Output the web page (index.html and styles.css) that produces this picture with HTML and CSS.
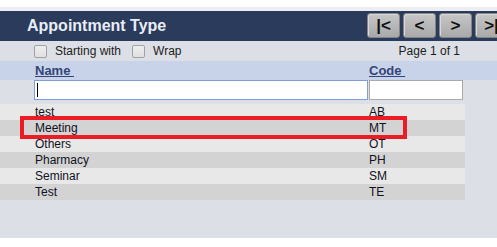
FILE: index.html
```html
<!DOCTYPE html>
<html>
<head>
<meta charset="utf-8">
<link rel="stylesheet" href="styles.css">
</head>
<body>
<div class="panel">
  <div class="titlebar">
    <div class="title">Appointment Type</div>
    <div class="pager">
      <button class="pbtn">|&lt;</button>
      <button class="pbtn">&lt;</button>
      <button class="pbtn">&gt;</button>
      <button class="pbtn">&gt;|</button>
    </div>
  </div>
  <div class="options">
    <label class="opt"><span class="cb"></span>Starting with</label>
    <label class="opt"><span class="cb"></span>Wrap</label>
    <span class="pageinfo">Page 1 of 1</span>
  </div>
  <div class="colhead">
    <span></span>
    <a class="sort">Name&nbsp;</a>
    <a class="sort">Code&nbsp;</a>
  </div>
  <div class="filter">
    <span></span>
    <div class="field focus"><span class="caret"></span></div>
    <div class="field code"></div>
  </div>
  <div class="rows">
    <div class="row"><span></span><span>test</span><span>AB</span></div>
    <div class="row alt"><span></span><span>Meeting</span><span>MT</span></div>
    <div class="row"><span></span><span>Others</span><span>OT</span></div>
    <div class="row alt"><span></span><span>Pharmacy</span><span>PH</span></div>
    <div class="row"><span></span><span>Seminar</span><span>SM</span></div>
    <div class="row alt"><span></span><span>Test</span><span>TE</span></div>
  </div>
  <div class="highlight"></div>
</div>
</body>
</html>
```
FILE: styles.css
```css
html, body {
  margin: 0;
  padding: 0;
  background: #ffffff;
  overflow: hidden;
}
body {
  width: 497px;
  height: 247px;
  padding-top: 7px;
  box-sizing: border-box;
  font-family: "Liberation Sans", Arial, sans-serif;
}
.panel {
  position: relative;
  background: #dcdfe6;
  border-top: 4px solid #eceef1;
  padding-bottom: 38px;
  overflow: hidden;
}
.titlebar {
  display: flex;
  align-items: center;
  height: 30px;
  background: #2b3b5c;
}
.title {
  width: 340px;
  flex-shrink: 0;
  padding-left: 27px;
  font-size: 16px;
  font-weight: bold;
  color: #e8edf5;
}
.pager {
  display: flex;
  gap: 3px;
  flex-shrink: 0;
  padding-bottom: 1px;
}
.pbtn {
  width: 33px;
  height: 25px;
  padding: 0;
  border: 1px solid #858585;
  border-radius: 3px;
  background: linear-gradient(#c6c6c6, #a9a9a9);
  box-shadow: inset 1px 1px 0 #d8d8d8;
  font-family: "Liberation Sans", Arial, sans-serif;
  font-size: 17px;
  font-weight: bold;
  color: #111;
  line-height: 22px;
}
.options {
  display: flex;
  align-items: center;
  height: 20px;
  padding-left: 34px;
  font-size: 12px;
  color: #1c1c1c;
}
.opt {
  display: flex;
  align-items: center;
  gap: 8px;
  margin-right: 11px;
}
.cb {
  width: 11px;
  height: 11px;
  border: 1px solid #a2a2a2;
  border-radius: 2px;
  background: linear-gradient(#eeeeee, #e0e0e0);
}
.pageinfo {
  margin-left: auto;
  margin-right: 37px;
}
.colhead {
  display: grid;
  grid-template-columns: 35px 334px 96px;
  align-items: center;
  height: 19px;
  background: #c8d3e9;
}
.sort {
  font-size: 13px;
  font-weight: bold;
  color: #34447a;
  text-decoration: underline;
}
.filter {
  display: grid;
  grid-template-columns: 34px 335px 94px;
  height: 24px;
}
.field {
  height: 20px;
  box-sizing: border-box;
  background: #ffffff;
  border: 1px solid #a9a9a9;
  position: relative;
}
.field.focus {
  border-color: #7c9fd6;
  margin-right: 1px;
}
.caret {
  position: absolute;
  left: 2px;
  top: 2px;
  width: 1px;
  height: 14px;
  background: #000;
}
.rows {
  width: 465px;
}
.row {
  display: grid;
  grid-template-columns: 35px 334px 96px;
  height: 16px;
  line-height: 16px;
  font-size: 12px;
  color: #111122;
  background: #e8e8e8;
}
.row.alt {
  background: #d3d3d3;
}
.highlight {
  position: absolute;
  left: 20px;
  top: 105px;
  width: 387px;
  height: 23px;
  box-sizing: border-box;
  border: 4px solid #ec1c24;
}
```
